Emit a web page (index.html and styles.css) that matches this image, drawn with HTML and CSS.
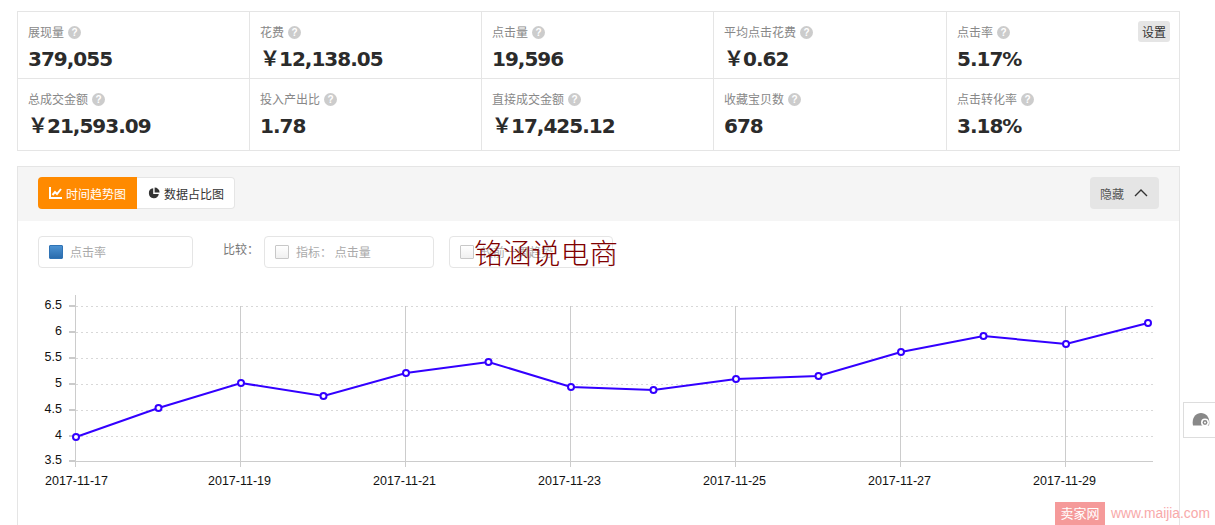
FILE: index.html
```html
<!DOCTYPE html>
<html lang="en">
<head>
  <meta charset="UTF-8" />
  <title>数据报表</title>
  <link rel="stylesheet" href="styles.css">
</head>
<body>
  <div class="page">

    <!-- Metrics -->
    <div class="metrics">
      <div class="metric"><div class="metric_label">展现量<span class="help">?</span></div><div class="metric_value">379,055</div></div>
      <div class="metric"><div class="metric_label">花费<span class="help">?</span></div><div class="metric_value">￥12,138.05</div></div>
      <div class="metric"><div class="metric_label">点击量<span class="help">?</span></div><div class="metric_value">19,596</div></div>
      <div class="metric"><div class="metric_label">平均点击花费<span class="help">?</span></div><div class="metric_value">￥0.62</div></div>
      <div class="metric"><div class="metric_label">点击率<span class="help">?</span></div><div class="metric_value">5.17%</div><button class="settings">设置</button></div>
      <div class="metric"><div class="metric_label">总成交金额<span class="help">?</span></div><div class="metric_value">￥21,593.09</div></div>
      <div class="metric"><div class="metric_label">投入产出比<span class="help">?</span></div><div class="metric_value">1.78</div></div>
      <div class="metric"><div class="metric_label">直接成交金额<span class="help">?</span></div><div class="metric_value">￥17,425.12</div></div>
      <div class="metric"><div class="metric_label">收藏宝贝数<span class="help">?</span></div><div class="metric_value">678</div></div>
      <div class="metric"><div class="metric_label">点击转化率<span class="help">?</span></div><div class="metric_value">3.18%</div></div>
    </div>

    <!-- Chart panel -->
    <div class="panel">
      <div class="panel_head">
        <div class="tabs">
          <div class="tab tab_active">
            <svg width="13" height="12" viewBox="0 0 13 12"><path d="M1 0v11h12" fill="none" stroke="#fff" stroke-width="2"/><path d="M3.500 8l2.500-3 2 2 4-5" fill="none" stroke="#fff" stroke-width="2"/></svg>
            时间趋势图
          </div>
          <div class="tab">
            <svg width="12" height="12" viewBox="0 0 12 12"><path d="M5.200 1.200A5 5 0 1 0 10.800 7H5.200z" fill="#333"/><path d="M6.600 0.600v5h5a5 5 0 0 0-5-5z" fill="#333"/></svg>
            数据占比图
          </div>
        </div>
        <button class="toggle">隐藏
          <svg width="14" height="8" viewBox="0 0 14 8"><path d="M1 7l6-6 6 6" fill="none" stroke="#333" stroke-width="1.400"/></svg>
        </button>
      </div>

      <div class="filters">
        <div class="picker picker_main"><span class="check check_on"></span>点击率</div>
        <span class="compare_label">比较：</span>
        <div class="picker picker_metric"><span class="check"></span>指标：&nbsp;点击量</div>
        <div class="picker picker_range"><span class="check"></span>较前一周趋势</div>
      </div>

      <svg class="chart" width="1161" height="210" viewBox="18 290 1161 210">
        <g class="grid_h">
          <path d="M76 306.500H1153M76 332.500H1153M76 358.500H1153M76 384.500H1153M76 410.500H1153M76 436.500H1153"/>
        </g>
        <g class="axis">
          <path d="M75.500 295V467M75 461.500H1153"/>
          <path d="M240.500 306V467M405.500 306V467M570.500 306V467M735.500 306V467M900.500 306V467M1065.500 306V467"/>
        </g>
        <path class="ticks" d="M69 306H75M69 332H75M69 358H75M69 384H75M69 410H75M69 436H75M69 461H75"/>
        <g class="labels_y">
          <text x="62" y="309">6.5</text>
          <text x="62" y="335">6</text>
          <text x="62" y="361">5.5</text>
          <text x="62" y="387">5</text>
          <text x="62" y="413">4.5</text>
          <text x="62" y="439">4</text>
          <text x="62" y="464">3.5</text>
        </g>
        <g class="labels_x">
          <text x="76.500" y="485">2017-11-17</text>
          <text x="239.500" y="485">2017-11-19</text>
          <text x="404.500" y="485">2017-11-21</text>
          <text x="569.500" y="485">2017-11-23</text>
          <text x="734.500" y="485">2017-11-25</text>
          <text x="899.500" y="485">2017-11-27</text>
          <text x="1064.500" y="485">2017-11-29</text>
        </g>
        <polyline class="line" points="76,437 158.500,408 241,383 323.500,396 406,373 488.500,362 571,387 653.500,390 736,379 818.500,376 901,352 983.500,336 1066,344 1148,323"/>
        <g class="dots">
          <circle cx="76" cy="437" r="3"/><circle cx="158.500" cy="408" r="3"/><circle cx="241" cy="383" r="3"/>
          <circle cx="323.500" cy="396" r="3"/><circle cx="406" cy="373" r="3"/><circle cx="488.500" cy="362" r="3"/>
          <circle cx="571" cy="387" r="3"/><circle cx="653.500" cy="390" r="3"/><circle cx="736" cy="379" r="3"/>
          <circle cx="818.500" cy="376" r="3"/><circle cx="901" cy="352" r="3"/><circle cx="983.500" cy="336" r="3"/>
          <circle cx="1066" cy="344" r="3"/><circle cx="1148" cy="323" r="3"/>
        </g>
      </svg>
    </div>
  </div>

  <!-- Overlays -->
  <div class="stamp">铭涵说电商</div>
  <div class="side_tool">
    <svg width="18" height="15" viewBox="0 0 18 15"><path d="M1 13.500C-.5 6 3.500 1 9 1s9.500 5 8 12.500z" fill="#888"/><circle cx="13" cy="10.500" r="4" fill="#fff"/><circle cx="13" cy="10.500" r="2.400" fill="#888"/><circle cx="13" cy="10.500" r="1" fill="#fff"/></svg>
  </div>
  <div class="brand"><span class="brand_badge">卖家网</span><span class="brand_url">www.maijia.com</span></div>
</body>
</html>
```

FILE: styles.css
```css
html, body {
  height: 100%;
  margin: 0;
  overflow: hidden;
  background: #fff;
}

body {
  font-family: "Noto Sans CJK SC", "Liberation Sans", sans-serif;
  font-size: 12px;
  color: #333;
}

.page {
  height: 514px;
  padding: 11px 35px 0 17px;
  overflow: hidden;
}

/* Metrics */
.metrics {
  display: grid;
  grid-template-columns: 232px 232px 232px 233px 233px;
  grid-template-rows: 67px 72px;
  border-top: 1px solid #e5e5e5;
  border-left: 1px solid #e5e5e5;
  margin-bottom: 15px;
}

.metric {
  position: relative;
  padding: 11px 10px 0 10px;
  border-right: 1px solid #e5e5e5;
  border-bottom: 1px solid #e5e5e5;
}

.metric_label {
  display: flex;
  align-items: center;
  height: 18px;
  line-height: 18px;
  color: #888;
}

.help {
  width: 13px;
  height: 13px;
  margin-left: 4px;
  border-radius: 50%;
  background: #ccc;
  color: #fff;
  font-family: "Liberation Sans", sans-serif;
  font-size: 10px;
  font-weight: bold;
  line-height: 13px;
  text-align: center;
}

.metric_value {
  margin-top: 5px;
  height: 26px;
  line-height: 26px;
  font-family: "DejaVu Sans", "Noto Sans CJK SC", sans-serif;
  font-size: 20px;
  font-weight: bold;
  letter-spacing: -1px;
  color: #2b2b2b;
  white-space: nowrap;
}

.settings {
  position: absolute;
  top: 9px;
  right: 9px;
  width: 32px;
  height: 21px;
  padding: 0;
  border: none;
  border-radius: 3px;
  background: #e5e5e5;
  color: #333;
  font-family: inherit;
  font-size: 12px;
}

/* Chart panel */
.panel {
  height: 400px;
  border: 1px solid #e5e5e5;
}

.panel_head {
  display: flex;
  justify-content: space-between;
  align-items: flex-start;
  box-sizing: border-box;
  height: 54px;
  padding: 10px 20px 0;
  background: #f5f5f5;
}

.tabs {
  display: flex;
  height: 32px;
}

.tab {
  display: flex;
  align-items: center;
  gap: 4px;
  box-sizing: border-box;
  width: 98px;
  padding-left: 11px;
  background: #fff;
  border: 1px solid #e5e5e5;
  border-left: none;
  border-radius: 0 4px 4px 0;
}

.tab_active {
  width: 99px;
  border: none;
  border-radius: 4px 0 0 4px;
  background: #ff8a00;
  color: #fff;
}

.toggle {
  display: flex;
  align-items: center;
  justify-content: space-between;
  width: 69px;
  height: 32px;
  padding: 0 11px 0 10px;
  border: none;
  border-radius: 4px;
  background: #e5e5e5;
  color: #555;
  font-family: inherit;
  font-size: 12px;
}

.filters {
  display: flex;
  align-items: center;
  height: 32px;
  margin-top: 15px;
  padding-left: 20px;
  color: #aaa;
}

.picker {
  display: flex;
  align-items: center;
  box-sizing: border-box;
  height: 32px;
  padding: 0 0 1px 10px;
  border: 1px solid #e5e5e5;
  border-radius: 4px;
  white-space: nowrap;
}

.picker_main {
  width: 155px;
}

.compare_label {
  margin: -8px 5px 0 30px;
  color: #777;
}

.picker_metric {
  width: 170px;
  margin-right: 15px;
}

.picker_range {
  width: 164px;
}

.check {
  width: 14px;
  height: 14px;
  margin-right: 7px;
  box-sizing: border-box;
  border: 1px solid #c8c8c8;
  border-radius: 1px;
  background: linear-gradient(#fff, #f0f0f0);
}

.check_on {
  border-color: #2f73b5;
  background: linear-gradient(#4c92d2, #2a6cad);
}

.chart {
  display: block;
  margin-top: 22px;
}

.grid_h path {
  fill: none;
  stroke: #d8d8d8;
  stroke-dasharray: 2 3;
}

.axis path {
  fill: none;
  stroke: #ccc;
}

.ticks {
  stroke: #bbb;
  stroke-width: 1.500;
}

.chart text {
  font-family: "Liberation Sans", sans-serif;
  font-size: 12.500px;
  fill: #111;
}

.labels_y text {
  text-anchor: end;
}

.labels_x text {
  text-anchor: middle;
}

.line {
  fill: none;
  stroke: #3300ff;
  stroke-width: 2;
}

.dots circle {
  fill: #fff;
  stroke: #3300ff;
  stroke-width: 2;
}

/* Overlays */
.stamp {
  position: absolute;
  left: 474px;
  top: 232px;
  font-family: "Noto Sans CJK SC", sans-serif;
  font-size: 28.800px;
  font-weight: 300;
  line-height: 40px;
  color: #800000;
  white-space: nowrap;
}

.side_tool {
  position: absolute;
  left: 1183px;
  top: 402px;
  box-sizing: border-box;
  width: 40px;
  height: 36px;
  padding: 9px 0 0 8px;
  border: 1px solid #ddd;
  background: #fff;
}

.side_tool svg {
  display: block;
}

.brand {
  position: absolute;
  left: 1055px;
  top: 502px;
  display: flex;
  align-items: center;
  height: 23px;
  white-space: nowrap;
}

.brand_badge {
  width: 50px;
  height: 23px;
  line-height: 22px;
  text-align: center;
  background: #f59a9a;
  color: #fff;
  font-size: 13px;
}

.brand_url {
  margin-left: 6px;
  font-family: "Liberation Sans", sans-serif;
  font-size: 13.800px;
  color: #f8a9a9;
}
```
